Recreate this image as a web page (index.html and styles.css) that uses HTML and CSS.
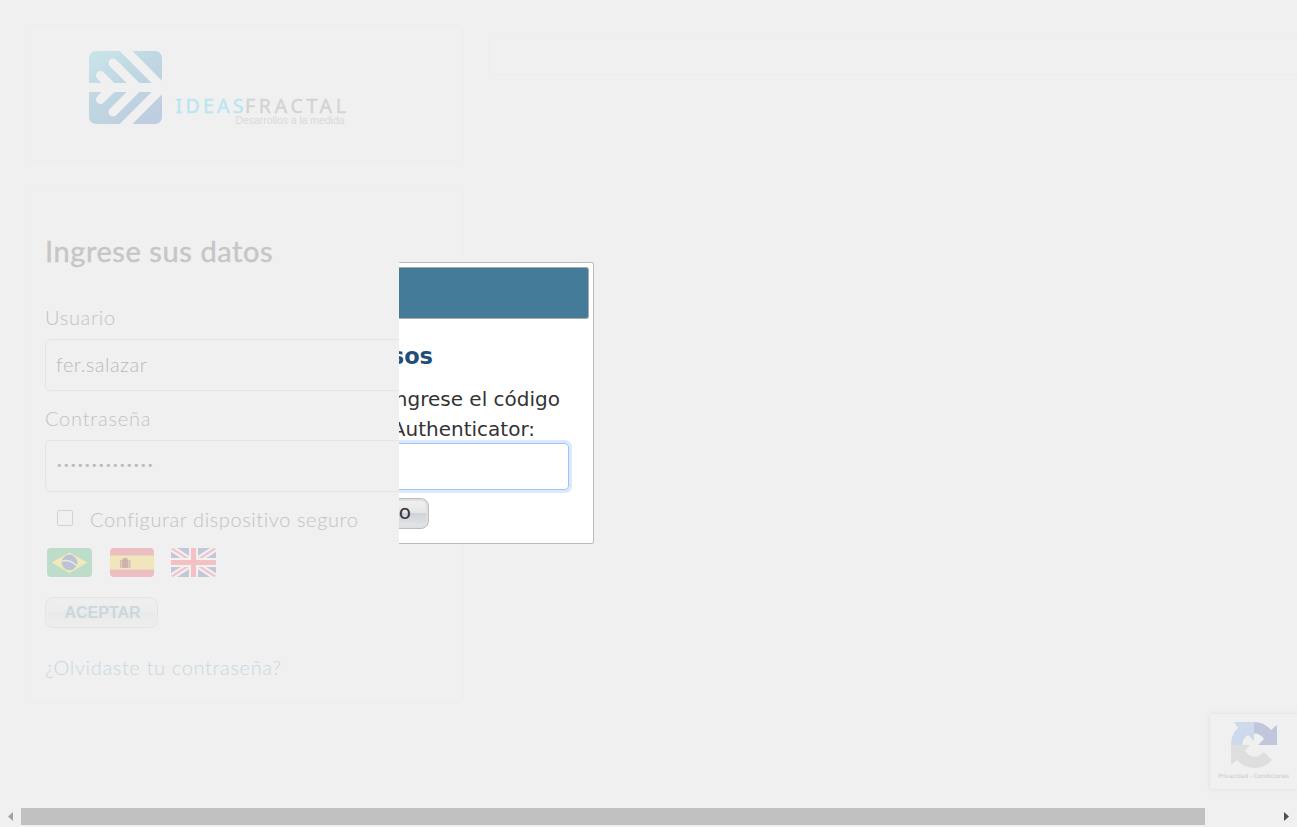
FILE: index.html
```html
<!DOCTYPE html>
<html lang="es">
<head>
<meta charset="utf-8">
<title>Ideas Fractal</title>
<link rel="stylesheet" href="styles.css">
</head>
<body>
<div class="page">
  <div class="columns">
    <div class="left">
      <div class="panel brand">
        <svg class="logo" viewBox="0 0 262 80" width="262" height="80">
          <defs>
            <linearGradient id="lg" x1="0" y1="0" x2=".75" y2="1"><stop offset="0" stop-color="#c9e6e9"/><stop offset=".5" stop-color="#c0d6e2"/><stop offset="1" stop-color="#becee0"/></linearGradient>
            <clipPath id="sq"><rect x="1" y="1" width="73" height="73" rx="7"/></clipPath>
          </defs>
          <rect x="1" y="1" width="73" height="73" rx="7" fill="url(#lg)"/>
          <g clip-path="url(#sq)" stroke="#f0f0f0" stroke-width="9" stroke-linecap="round" fill="none">
            <path d="M0 37.5H75"/>
            <path d="M12.500 25.500L24.500 37.500L12.500 49.500M25 13L49.500 37.500L25 62M34 -3L74.500 37.500L34 78"/>
          </g>
          <g class="name">
            <text x="87.500" y="63.300" fill="#b9e6f1" stroke="#b9e6f1" textLength="68" lengthAdjust="spacing">IDEAS</text>
            <text x="157" y="63.300" fill="#d3d3d3" stroke="#d3d3d3" textLength="101" lengthAdjust="spacing">FRACTAL</text>
          </g>
          <text class="tag" x="147.500" y="74" textLength="109">Desarrollos a la medida</text>
        </svg>
      </div>
      <div class="panel login">
        <h2>Ingrese sus datos</h2>
        <div class="label"><span class="t-user">Usuario</span></div>
        <div class="field"><span class="t-value">fer.salazar</span></div>
        <div class="label"><span class="t-pass">Contraseña</span></div>
        <div class="field dots">••••••••••••••</div>
        <div class="check"><span class="box"></span><span class="t-check">Configurar dispositivo seguro</span></div>
        <div class="flags">
          <svg width="45" height="29" viewBox="0 0 45 29"><rect width="45" height="29" rx="4" fill="#bddcca"/><path d="M4.500 14.500L22.500 4.500L40.500 14.500L22.500 25Z" fill="#f1e8bb"/><circle cx="22.500" cy="14.500" r="7.800" fill="#bdc2d4"/><path d="M15 13Q23 11 29.500 17.500" stroke="#e4e8ea" stroke-width="1.500" fill="none"/></svg>
          <svg width="44" height="29" viewBox="0 0 44 29"><defs><clipPath id="es"><rect width="44" height="29" rx="4"/></clipPath></defs><g clip-path="url(#es)"><rect width="44" height="29" fill="#ebbfc2"/><rect y="7.500" width="44" height="14" fill="#f0e5bb"/><path d="M10 20V12h1.500v8zM19 20V12h1.500v8z" fill="#cfbeb7"/><path d="M12 20v-7l1-3h4l1.500 3v7z" fill="#d4b3ae"/><path d="M12.500 13h5M12.500 17h5" stroke="#c2acaa"/></g></svg>
          <svg class="uk" width="45" height="29" viewBox="0 0 45 29"><defs><clipPath id="uk"><rect width="45" height="29" rx="3"/></clipPath></defs><g clip-path="url(#uk)"><rect width="45" height="29" fill="#c3c7d7"/><path d="M0 0L45 29M45 0L0 29" stroke="#f2f0f1" stroke-width="6.500"/><path d="M0 0L45 29M45 0L0 29" stroke="#f0c4c6" stroke-width="2.200"/><path d="M22.500 0V29M0 14.500H45" stroke="#f3f0f0" stroke-width="9"/><path d="M22.500 0V29M0 14.500H45" stroke="#f2c1c3" stroke-width="5"/></g></svg>
        </div>
        <div class="accept"><span>ACEPTAR</span></div>
        <div class="forgot"><span class="t-forgot">¿Olvidaste tu contraseña?</span></div>
      </div>
    </div>
    <div class="panel right"></div>
  </div>
  <div class="scroll">
    <svg width="21" height="19" viewBox="0 0 21 19"><path d="M13 4V13L8 8.500Z" fill="#a3a3a3"/></svg>
    <div class="thumb"></div>
    <svg width="21" height="19" viewBox="0 0 21 19"><path d="M8 4V13L13 8.500Z" fill="#505050"/></svg>
  </div>
</div>

<div class="dialog">
  <div class="titlebar"></div>
  <div class="heading">sos</div>
  <div class="line l1">ingrese el código</div>
  <div class="line l2">Authenticator:</div>
  <div class="code"></div>
  <div class="send">o</div>
</div>

<div class="captcha">
  <svg width="48" height="48" viewBox="0 0 48 48">
    <path d="M1 24A23 23 0 0 1 8 7L4 1H24V20L18 14Q12 18 12.500 24Z" fill="#cddaee"/>
    <path d="M24 1A23 23 0 0 1 41 9L47 4V24H28L34 18Q30 12 24 12.500Z" fill="#c1c6dd"/>
    <path d="M1 24H20L15 30Q24 41 34 31L42 39A23 23 0 0 1 7 39L1 44Z" fill="#dedede"/>
  </svg>
  <span>Privacidad - Condiciones</span>
</div>
</body>
</html>
```

FILE: styles.css
```css
* { box-sizing: border-box; }
body {
  margin: 0;
  background: #f0f0f0;
  overflow: hidden;
  font-family: Lato, "Open Sans", sans-serif;
  font-weight: 300;
  font-size: 20px;
  font-variant-ligatures: none;
  color: #c2c2c2;
}
.page { height: 827px; display: flex; flex-direction: column; justify-content: space-between; }
.columns { display: flex; gap: 26px; padding: 25px 0 0 26px; }
.left { width: 437px; display: flex; flex-direction: column; gap: 25px; }
.panel { border: 1px solid #ededed; border-radius: 6px; }
.brand { height: 137px; padding: 24px 0 0 61px; }
.logo { display: block; }
.name { font: 400 19.500px "Noto Sans", sans-serif; stroke-width: .4px; }
.tag { font: 10.500px "Liberation Sans", sans-serif; fill: #d9d9d9; }
.login { height: 516px; padding: 42px 18px 0; }
.right { flex: 1; height: 40px; margin-top: 10px; border-right: 0; border-radius: 6px 0 0 6px; }

h2 { margin: 0 0 32px; height: 41px; line-height: 41px; font-size: 29px; font-weight: 400; letter-spacing: .58px; white-space: nowrap; color: #c6c6c6; -webkit-text-stroke: .4px #c6c6c6; }
.label { height: 36px; line-height: 28px; }
.field { height: 52px; border: 1px solid #e5e5e5; border-radius: 5px; padding-left: 10px; line-height: 48px; color: #bababa; margin-bottom: 13px; }
.t-user { letter-spacing: .7px; }
.t-value { letter-spacing: .5px; }
.t-pass { letter-spacing: .78px; }
.t-check { letter-spacing: .6px; }
.t-forgot { letter-spacing: .66px; }
.dots { font: 11px/50px "DejaVu Sans", sans-serif; letter-spacing: .52px; }
.check { height: 28px; display: flex; align-items: center; padding-left: 12px; margin-bottom: 15px; white-space: nowrap; }
.box { width: 16px; height: 16px; border: 1px solid #d2d2d2; border-radius: 2px; margin: 0 17px 3px 0; }
.flags { display: flex; gap: 18px; padding-left: 2px; height: 49px; }
.uk { margin-left: -1px; }
.accept {
  width: 113px; height: 31px; border: 1px solid #e4e4e4; border-radius: 8px;
  background: linear-gradient(#efefef, #ececec 48%, #e8e9ea 50%, #eeeeee);
  box-shadow: inset 0 0 0 2px #ededed;
  font: bold 16px/29px "Liberation Sans", sans-serif; color: #cbd7dd; text-align: center;
  padding-left: 2px;
}
.forgot { margin-top: 25px; line-height: 28px; color: #c8d7df; white-space: nowrap; }

.scroll { display: flex; height: 19px; align-items: stretch; }
.thumb { flex: 0 0 1184px; height: 17px; background: #c1c1c1; margin-right: 71px; }

.dialog {
  position: absolute; left: 399px; top: 262px; width: 195px; height: 282px;
  background: #fff; border: 1px solid #bbb; border-left: 0; border-radius: 0 3px 3px 0;
  overflow: hidden; display: flex; flex-direction: column; align-items: flex-end;
  font-family: "DejaVu Sans", sans-serif; font-weight: 400; color: #333;
}
.titlebar { width: 190px; height: 52px; margin: 4px 4px 0 0; flex: none; background: #447b99; border: 1px solid #aaa; border-left: 0; border-radius: 0 3px 3px 0; }
.heading { margin: 22px 160px 0 0; font-weight: 700; font-size: 22.500px; line-height: 30px; color: #1f4e79; }
.line { font-size: 20px; line-height: 30px; white-space: nowrap; flex: none; }
.l1 { margin: 13px 33px 0 0; }
.l2 { margin-right: 58px; }
.code { width: 200px; height: 47px; flex: none; margin: -1px 24px 0 0; border: 1px solid #a0c2f5; border-radius: 4px; box-shadow: 0 0 0 3px #dbe8fd; }
.send {
  width: 60px; height: 31px; flex: none; margin: 8px 164px 0 0; padding-right: 17px; text-align: right;
  border: 1px solid #bdbdbd; border-radius: 8px; box-shadow: inset 0 0 0 2px #dfdfdf;
  background: linear-gradient(#f2f2f2, #e4e5e6 48%, #cfd4d8 50%, #e5e6e8);
  font-size: 20px; line-height: 27px;
}

.captcha {
  position: absolute; left: 1210px; top: 714px; width: 87px; height: 75px;
  border-radius: 3px 0 0 3px; box-shadow: 0 0 4px #dcdcdc; background: #f0f0f0;
  display: flex; flex-direction: column; align-items: center; padding-top: 7px; overflow: visible;
}
.captcha span { font: 6px/10px "DejaVu Sans", sans-serif; color: #c9c9c9; white-space: nowrap; margin-top: 2px; letter-spacing: -.1px; }
```
